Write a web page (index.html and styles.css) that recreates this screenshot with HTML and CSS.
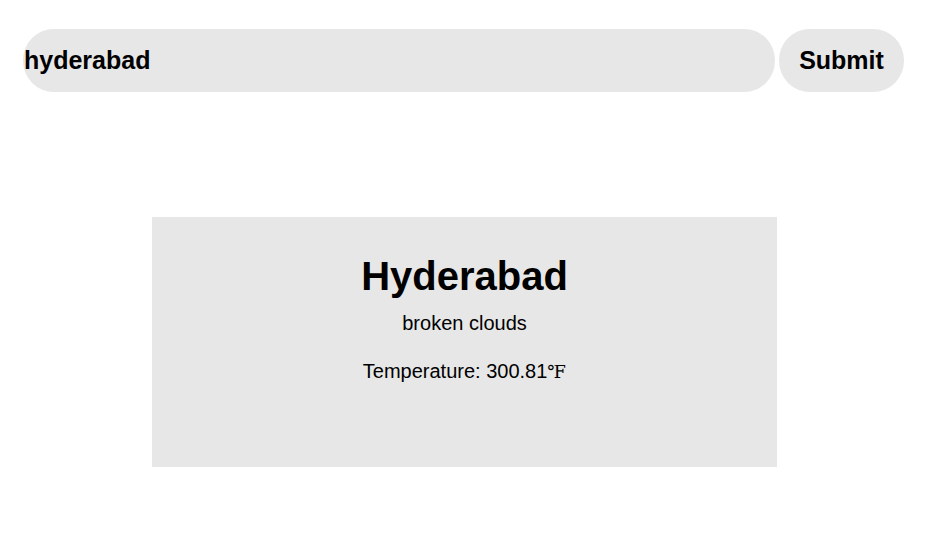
FILE: index.html
```html
<!DOCTYPE html>
<html>
<head>
<meta charset="utf-8">
<link rel="stylesheet" href="styles.css">
</head>
<body>
<form class="search">
  <input class="search-input" type="text" value="hyderabad">
  <button class="search-btn" type="button">Submit</button>
</form>
<div class="card">
  <h1 class="city">Hyderabad</h1>
  <p class="desc">broken clouds</p>
  <p class="temp">Temperature: 300.81<span class="unit">℉</span></p>
</div>
</body>
</html>
```
FILE: styles.css
```css
html, body {
  margin: 0;
  padding: 0;
  background: #ffffff;
  font-family: "Liberation Sans", Arial, sans-serif;
  color: #000;
}
.search {
  display: flex;
  gap: 4px;
  padding: 29px 0 0 23px;
  margin: 0;
}
.search-input {
  width: 752px;
  height: 63px;
  box-sizing: border-box;
  border: none;
  outline: none;
  background: #e7e7e7;
  border-radius: 31px;
  padding: 0 0 0 1px;
  font-family: "Liberation Sans", Arial, sans-serif;
  font-weight: bold;
  font-size: 25px;
  color: #000;
}
.search-btn {
  width: 125px;
  height: 63px;
  border: none;
  background: #e7e7e7;
  border-radius: 31px;
  font-family: "Liberation Sans", Arial, sans-serif;
  font-weight: bold;
  font-size: 25px;
  color: #000;
  padding: 0;
}
.card {
  width: 625px;
  height: 250px;
  box-sizing: border-box;
  margin: 125px 0 0 152px;
  background: #e7e7e7;
  padding-top: 36px;
  text-align: center;
}
.city {
  margin: 0;
  font-size: 40px;
  line-height: 46px;
  font-weight: bold;
}
.desc {
  margin: 13px 0 0;
  font-size: 20px;
  line-height: 23px;
}
.temp {
  margin: 25px 0 0;
  font-size: 20px;
  line-height: 23px;
}
.unit {
  font-family: "DejaVu Serif", "Liberation Serif", serif;
  font-size: 18px;
}
```
